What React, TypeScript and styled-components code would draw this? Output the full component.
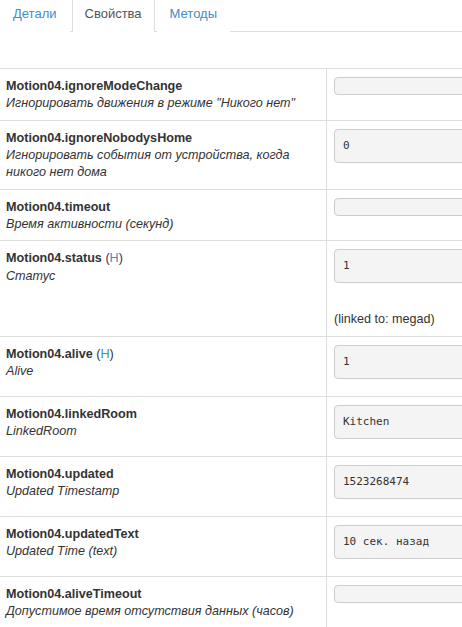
import React from "react";
import styled, { createGlobalStyle } from "styled-components";

const Global = createGlobalStyle`
  html, body {
    margin: 0;
    padding: 0;
    overflow: hidden;
    background: #fff;
  }
  body {
    font-family: "Liberation Sans", Arial, Helvetica, sans-serif;
    font-size: 12.6px;
    color: #333;
  }
`;

const Page = styled.div`
  width: 462px;
  overflow: hidden;
`;

const TabBar = styled.ul`
  display: flex;
  margin: 0;
  padding: 0;
  list-style: none;
  border-bottom: 1px solid #ddd;
  font-size: 13px;
`;

const Tab = styled.li<{ $active?: boolean }>`
  margin: 0 2px -1px 0;
  padding: 4px 12px 8px;
  line-height: 20px;
  border-left: 1px solid ${(p) => (p.$active ? "#ddd" : "transparent")};
  border-right: 1px solid ${(p) => (p.$active ? "#ddd" : "transparent")};
  background: #fff;
  color: ${(p) => (p.$active ? "#555" : "#428bca")};
  cursor: pointer;
`;

const Table = styled.div`
  margin-top: 36px;
  width: 760px;
`;

const Row = styled.div`
  display: grid;
  grid-template-columns: 327px 1fr;
  border-top: 1px solid #ddd;
`;

const NameCell = styled.div`
  box-sizing: border-box;
  padding: 9px 8px 7px 6px;
  border-right: 1px solid #ddd;
  line-height: 17.33px;
`;

const Title = styled.div`
  font-weight: bold;
`;

const Hist = styled.span`
  font-weight: normal;
`;

const HistLink = styled.span`
  color: #428bca;
`;

const Desc = styled.div`
  font-style: italic;
  width: 300px;
`;

const ValueCell = styled.div`
  padding: 8px 8px 8px 7px;
`;

const Value = styled.div<{ $empty?: boolean }>`
  box-sizing: border-box;
  height: ${(p) => (p.$empty ? "18px" : "34px")};
  margin-bottom: 9px;
  padding: 8px;
  background: #f4f4f4;
  border: 1px solid #ccc;
  border-radius: 4px;
  font-family: "DejaVu Sans Mono", "Liberation Mono", monospace;
  font-size: 11px;
  line-height: 16px;
  color: #333;
  white-space: pre;
`;

const Linked = styled.div`
  padding-top: 20px;
  line-height: 15.5px;
`;

type Prop = {
  name: string;
  desc: string;
  value: string;
  history?: boolean;
  linked?: string;
};

const props: Prop[] = [
  { name: "Motion04.ignoreModeChange", desc: 'Игнорировать движения в режиме "Никого нет"', value: "" },
  { name: "Motion04.ignoreNobodysHome", desc: "Игнорировать события от устройства, когда никого нет дома", value: "0" },
  { name: "Motion04.timeout", desc: "Время активности (секунд)", value: "" },
  { name: "Motion04.status", desc: "Статус", value: "1", history: true, linked: "(linked to: megad)" },
  { name: "Motion04.alive", desc: "Alive", value: "1", history: true },
  { name: "Motion04.linkedRoom", desc: "LinkedRoom", value: "Kitchen" },
  { name: "Motion04.updated", desc: "Updated Timestamp", value: "1523268474" },
  { name: "Motion04.updatedText", desc: "Updated Time (text)", value: "10 сек. назад" },
  { name: "Motion04.aliveTimeout", desc: "Допустимое время отсутствия данных (часов)", value: "" },
];

export default function App() {
  return (
    <Page>
      <Global />
      <TabBar>
        <Tab>Детали</Tab>
        <Tab $active>Свойства</Tab>
        <Tab>Методы</Tab>
      </TabBar>
      <Table>
        {props.map((p) => (
          <Row key={p.name}>
            <NameCell>
              <Title>
                {p.name}
                {p.history && (
                  <Hist>
                    {" "}(<HistLink>H</HistLink>)
                  </Hist>
                )}
              </Title>
              <Desc>{p.desc}</Desc>
            </NameCell>
            <ValueCell>
              <Value $empty={p.value === ""}>{p.value}</Value>
              {p.linked && <Linked>{p.linked}</Linked>}
            </ValueCell>
          </Row>
        ))}
      </Table>
    </Page>
  );
}
